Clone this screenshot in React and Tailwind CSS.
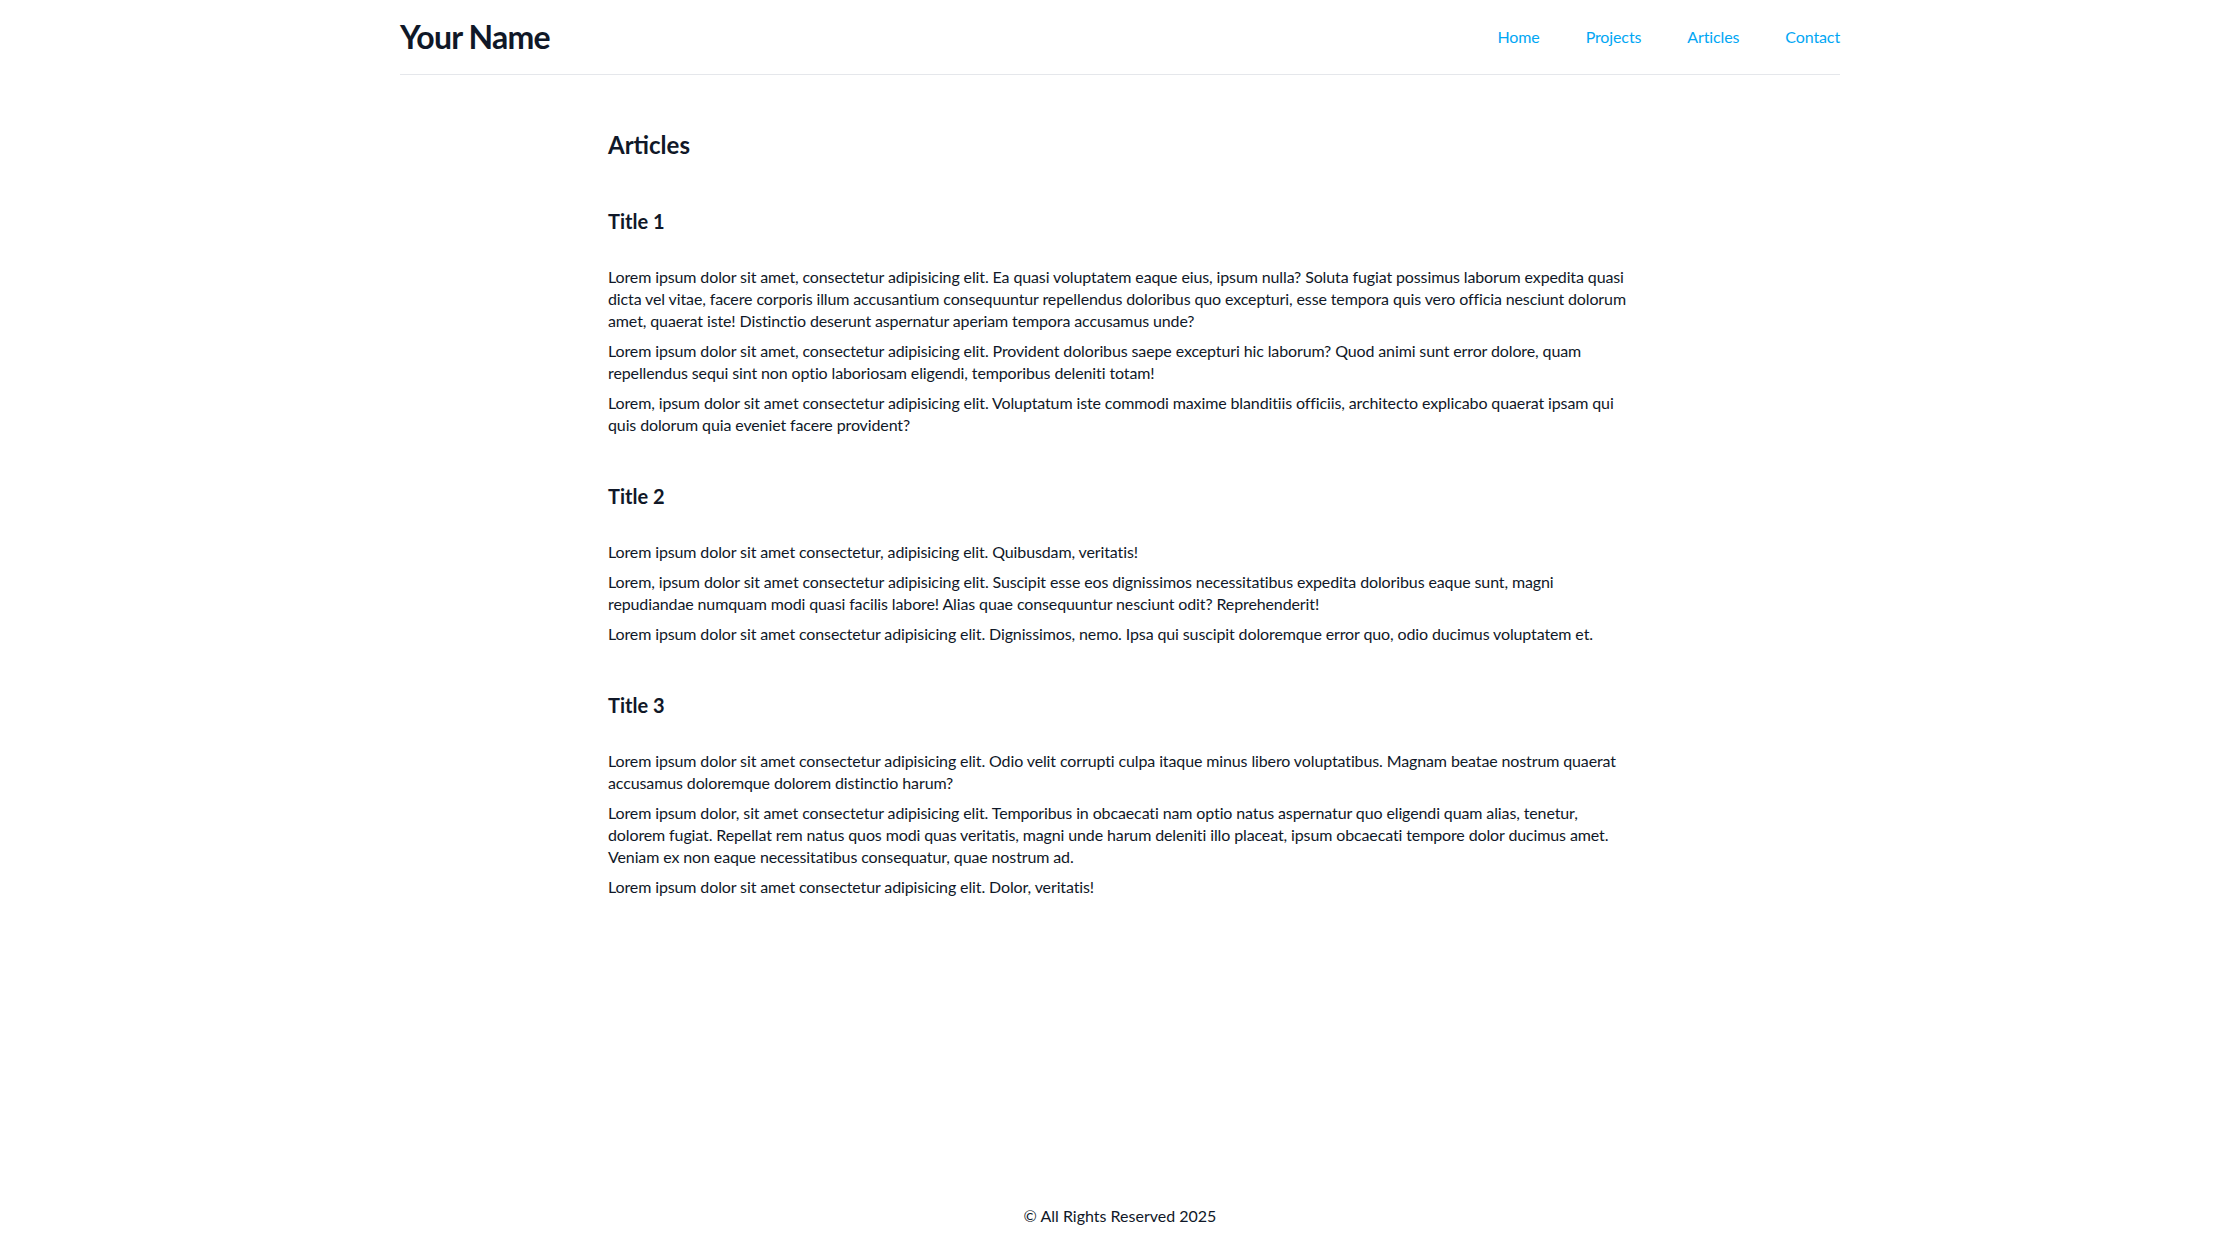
const articles = [
  {
    title: 'Title 1',
    paragraphs: [
      'Lorem ipsum dolor sit amet, consectetur adipisicing elit. Ea quasi voluptatem eaque eius, ipsum nulla? Soluta fugiat possimus laborum expedita quasi dicta vel vitae, facere corporis illum accusantium consequuntur repellendus doloribus quo excepturi, esse tempora quis vero officia nesciunt dolorum amet, quaerat iste! Distinctio deserunt aspernatur aperiam tempora accusamus unde?',
      'Lorem ipsum dolor sit amet, consectetur adipisicing elit. Provident doloribus saepe excepturi hic laborum? Quod animi sunt error dolore, quam repellendus sequi sint non optio laboriosam eligendi, temporibus deleniti totam!',
      'Lorem, ipsum dolor sit amet consectetur adipisicing elit. Voluptatum iste commodi maxime blanditiis officiis, architecto explicabo quaerat ipsam qui quis dolorum quia eveniet facere provident?',
    ],
  },
  {
    title: 'Title 2',
    paragraphs: [
      'Lorem ipsum dolor sit amet consectetur, adipisicing elit. Quibusdam, veritatis!',
      'Lorem, ipsum dolor sit amet consectetur adipisicing elit. Suscipit esse eos dignissimos necessitatibus expedita doloribus eaque sunt, magni repudiandae numquam modi quasi facilis labore! Alias quae consequuntur nesciunt odit? Reprehenderit!',
      'Lorem ipsum dolor sit amet consectetur adipisicing elit. Dignissimos, nemo. Ipsa qui suscipit doloremque error quo, odio ducimus voluptatem et.',
    ],
  },
  {
    title: 'Title 3',
    paragraphs: [
      'Lorem ipsum dolor sit amet consectetur adipisicing elit. Odio velit corrupti culpa itaque minus libero voluptatibus. Magnam beatae nostrum quaerat accusamus doloremque dolorem distinctio harum?',
      'Lorem ipsum dolor, sit amet consectetur adipisicing elit. Temporibus in obcaecati nam optio natus aspernatur quo eligendi quam alias, tenetur, dolorem fugiat. Repellat rem natus quos modi quas veritatis, magni unde harum deleniti illo placeat, ipsum obcaecati tempore dolor ducimus amet. Veniam ex non eaque necessitatibus consequatur, quae nostrum ad.',
      'Lorem ipsum dolor sit amet consectetur adipisicing elit. Dolor, veritatis!',
    ],
  },
];

const links = ['Home', 'Projects', 'Articles', 'Contact'];

export default function App() {
  return (
    <div className="min-h-screen flex flex-col bg-white text-gray-900 font-['Lato',sans-serif]">
      {/* Header */}
      <header className="mx-auto w-full max-w-[1440px] h-[75px] flex items-center justify-between border-b border-gray-200">
        <h1 className="text-[32px] font-bold tracking-tight">Your Name</h1>
        <nav className="flex gap-[46px] text-base text-sky-500 tracking-[-0.12px]">
          {links.map(l => (
            <a key={l} href="#" className="hover:underline">{l}</a>
          ))}
        </nav>
      </header>

      {/* Articles */}
      <main className="flex-1 mx-auto w-full max-w-5xl pt-[54px]">
        <h2 className="text-2xl font-bold">Articles</h2>
        {articles.map(a => (
          <section key={a.title} className="mt-[46px]">
            <h3 className="text-xl font-bold">{a.title}</h3>
            <div className="mt-[31px] space-y-2">
              {a.paragraphs.map((p, i) => (
                <p key={i} className="text-base leading-[22px] tracking-[-0.12px]">{p}</p>
              ))}
            </div>
          </section>
        ))}
      </main>

      <footer className="py-8 text-center text-base">© All Rights Reserved 2025</footer>
    </div>
  );
}
